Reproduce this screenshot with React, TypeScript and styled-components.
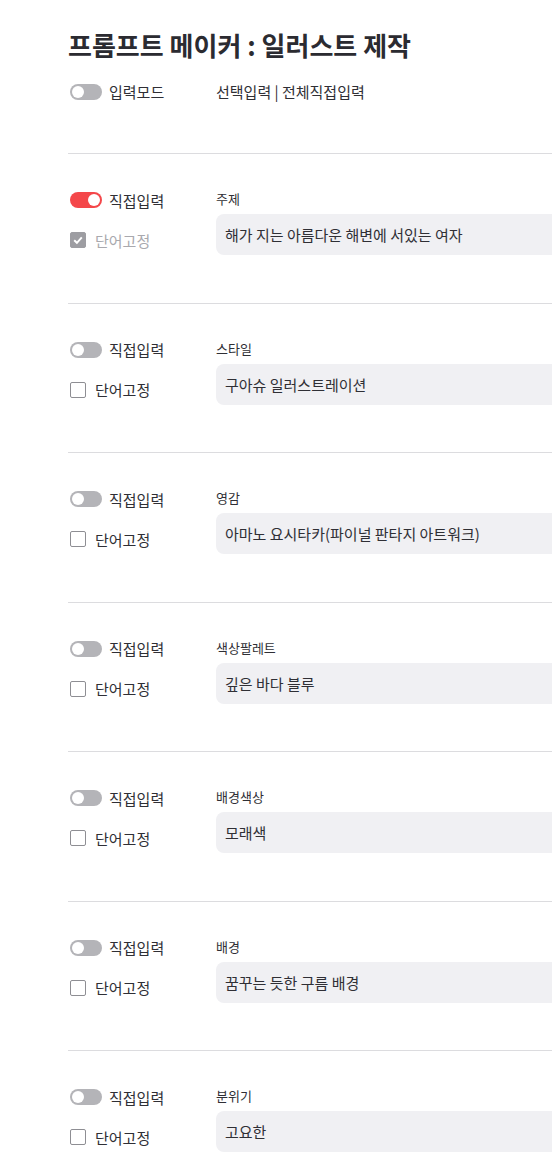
import React from 'react'
import styled, { createGlobalStyle } from 'styled-components'

const GlobalStyle = createGlobalStyle`
  html, body {
    margin: 0;
    padding: 0;
    background: #fff;
    overflow-x: hidden;
  }
  body {
    font-family: "Noto Sans CJK KR", "Noto Sans", sans-serif;
    color: #2f2f35;
  }
`

const Page = styled.div`
  width: 760px;
  padding: 27px 0 0 68px;
`

const Title = styled.h1`
  margin: 0 0 18px;
  font-size: 26px;
  line-height: 36px;
  font-weight: 700;
  letter-spacing: 0;
  color: #2b2b31;
`

const Grid = styled.div`
  display: grid;
  grid-template-columns: 148px 1fr;
  align-items: start;
`

const ModeRow = styled(Grid)`
  height: 20px;
  align-items: center;
  margin-bottom: 52px;
`

const Controls = styled.div`
  display: flex;
  flex-direction: column;
  gap: 20px;
`

const Line = styled.label<{ $muted?: boolean }>`
  display: flex;
  align-items: center;
  height: 20px;
  padding-left: 2px;
  font-size: 15px;
  color: ${(p) => (p.$muted ? '#a9a9ae' : '#2f2f35')};
`

const Track = styled.span<{ $on?: boolean }>`
  position: relative;
  width: 32px;
  height: 16px;
  border-radius: 8px;
  margin-right: 7px;
  background: ${(p) => (p.$on ? '#f4474a' : '#b4b4b8')};
  flex-shrink: 0;

  &::after {
    content: '';
    position: absolute;
    top: 2px;
    left: ${(p) => (p.$on ? '18px' : '2px')};
    width: 12px;
    height: 12px;
    border-radius: 50%;
    background: #fff;
  }
`

const Box = styled.span<{ $checked?: boolean }>`
  display: flex;
  align-items: center;
  justify-content: center;
  width: 16px;
  height: 16px;
  box-sizing: border-box;
  border-radius: 2px;
  margin-right: 9px;
  flex-shrink: 0;
  border: 1px solid ${(p) => (p.$checked ? '#9d9da2' : '#8e8e93')};
  background: ${(p) => (p.$checked ? '#9d9da2' : '#fff')};
`

const ModeText = styled.span`
  font-size: 15px;
  color: #2f2f35;
`

const Section = styled(Grid)`
  border-top: 1px solid #dcdcdf;
  padding: 36px 0 47.5px;
`

const Field = styled.div`
  display: flex;
  flex-direction: column;
  gap: 6px;
`

const FieldLabel = styled.span`
  font-size: 13px;
  line-height: 18px;
  color: #2f2f35;
`

const Input = styled.div`
  height: 41px;
  display: flex;
  align-items: center;
  padding-left: 9px;
  border-radius: 8px;
  background: #f0f0f3;
  font-size: 15px;
  color: #2f2f35;
`

const Check = () => (
  <svg width="12" height="12" viewBox="0 0 12 12">
    <path d="M2.2 6.2 L4.9 8.8 L9.8 3.4" fill="none" stroke="#fff" strokeWidth="1.9" />
  </svg>
)

interface Item {
  label: string
  value: string
  direct?: boolean
}

const items: Item[] = [
  { label: '주제', value: '해가 지는 아름다운 해변에 서있는 여자', direct: true },
  { label: '스타일', value: '구아슈 일러스트레이션' },
  { label: '영감', value: '아마노 요시타카(파이널 판타지 아트워크)' },
  { label: '색상팔레트', value: '깊은 바다 블루' },
  { label: '배경색상', value: '모래색' },
  { label: '배경', value: '꿈꾸는 듯한 구름 배경' },
  { label: '분위기', value: '고요한' },
]

export default function App() {
  return (
    <>
      <GlobalStyle />
      <Page>
        <Title>프롬프트 메이커 : 일러스트 제작</Title>
        <ModeRow>
          <Line>
            <Track />
            입력모드
          </Line>
          <ModeText>선택입력 | 전체직접입력</ModeText>
        </ModeRow>
        {items.map((item) => (
          <Section key={item.label}>
            <Controls>
              <Line>
                <Track $on={item.direct} />
                직접입력
              </Line>
              <Line $muted={item.direct}>
                <Box $checked={item.direct}>{item.direct && <Check />}</Box>
                단어고정
              </Line>
            </Controls>
            <Field>
              <FieldLabel>{item.label}</FieldLabel>
              <Input>{item.value}</Input>
            </Field>
          </Section>
        ))}
      </Page>
    </>
  )
}
